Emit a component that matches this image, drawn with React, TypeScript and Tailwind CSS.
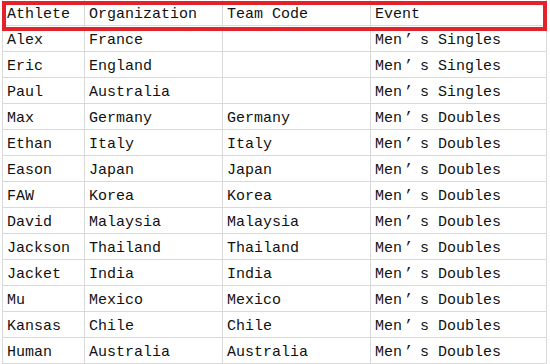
const rows: [string, string, string, string][] = [
  ["Alex", "France", "", "Men’s Singles"],
  ["Eric", "England", "", "Men’s Singles"],
  ["Paul", "Australia", "", "Men’s Singles"],
  ["Max", "Germany", "Germany", "Men’s Doubles"],
  ["Ethan", "Italy", "Italy", "Men’s Doubles"],
  ["Eason", "Japan", "Japan", "Men’s Doubles"],
  ["FAW", "Korea", "Korea", "Men’s Doubles"],
  ["David", "Malaysia", "Malaysia", "Men’s Doubles"],
  ["Jackson", "Thailand", "Thailand", "Men’s Doubles"],
  ["Jacket", "India", "India", "Men’s Doubles"],
  ["Mu", "Mexico", "Mexico", "Men’s Doubles"],
  ["Kansas", "Chile", "Chile", "Men’s Doubles"],
  ["Human", "Australia", "Australia", "Men’s Doubles"],
];

const header: [string, string, string, string] = ["Athlete", "Organization", "Team Code", "Event"];

// the full-width apostrophe takes two columns in the original sheet font
function Cell({ text }: { text: string }) {
  const parts = text.split("’");
  if (parts.length < 2) return <>{text}</>;
  return (
    <>
      {parts[0]}
      <span className="inline-block w-[18px] pl-[2px]">’</span>
      {parts[1]}
    </>
  );
}

function Row({ cells }: { cells: [string, string, string, string] }) {
  return (
    <div className="grid grid-cols-[82px_138px_148px_176px] h-[26px] border-b border-[#d9d9d9]">
      {cells.map((c, i) => (
        <div key={i} className="border-r border-[#d9d9d9] pl-[4px] pt-[4px] leading-[22px] whitespace-pre">
          <Cell text={c} />
        </div>
      ))}
    </div>
  );
}

export default function App() {
  return (
    <div className="relative w-[550px] h-[364px] overflow-hidden bg-white text-[15px] text-[#111]" style={{ fontFamily: '"Liberation Mono", monospace' }}>
      <div className="ml-[2px] w-fit border-l border-[#d9d9d9]">
        <Row cells={header} />
        {rows.map((r, i) => (
          <Row key={i} cells={r} />
        ))}
      </div>
      {/* highlight box around the header */}
      <div className="absolute left-[2px] top-[1px] w-[545px] h-[30px] border-4 border-[#e3222a]" />
    </div>
  );
}
